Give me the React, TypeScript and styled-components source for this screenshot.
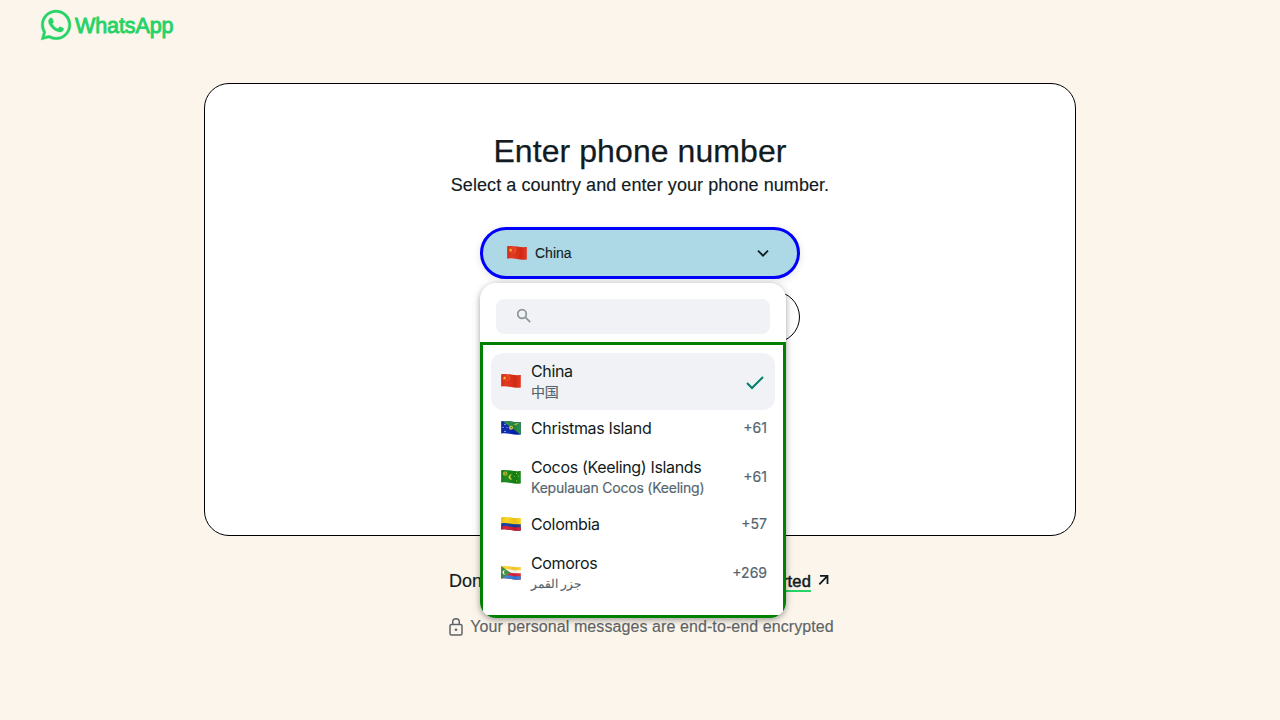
import React from 'react';
import styled, { createGlobalStyle } from 'styled-components';
import { SiWhatsapp } from 'react-icons/si';

const Global = createGlobalStyle`
  * { box-sizing: border-box; }
  body { margin: 0; background: #fcf5eb; color: #111b21; font-family: "Liberation Sans", Arial, sans-serif; overflow: hidden; }
`;
const Page = styled.div`height: 720px; display: flex; flex-direction: column; align-items: center;`;
const Header = styled.header`
  width: 100%; height: 50px; padding-left: 40.5px; display: flex; align-items: center; gap: 5px; color: #25d366; flex: none;
`;
const Logo = styled(SiWhatsapp)`width: 30px; height: 30px; stroke: #25d366; stroke-width: 0.3px; overflow: visible; margin-right: -0.5px;`;
const Wordmark = styled.span`padding-top: 2px; font-size: 21.5px; line-height: 30px; letter-spacing: -0.1px; -webkit-text-stroke: 0.9px #25d366; white-space: nowrap;`;
const Card = styled.main`
  margin-top: 33px; width: 872px; height: 453px; flex: none; background: #fff; border: 1px solid #000; border-radius: 25px;
  display: flex; flex-direction: column; align-items: center; padding-top: 48px;
`;
const Title = styled.h1`margin: 0; font-size: 32px; line-height: 38px; font-weight: 400; letter-spacing: 0.08px; -webkit-text-stroke: 0.25px #111b21; white-space: nowrap;`;
const Subtitle = styled.p`margin: 2px 0 0; font-size: 18px; line-height: 26px; letter-spacing: 0.07px; -webkit-text-stroke: 0.15px #111b21; white-space: nowrap;`;
const Field = styled.div`position: relative; margin-top: 29px; width: 320px;`;
const CountryButton = styled.button`
  width: 320px; height: 52px; border: 3px solid #00f; border-radius: 26px; background: #add8e6; color: #111b21;
  display: flex; align-items: center; padding: 0 26px 0 24px; font: 14px "Liberation Sans", sans-serif;
  box-shadow: 0 2px 8px rgba(0,0,0,.1);
`;
const ButtonLabel = styled.span`flex: 1; text-align: left; margin-left: 8px; -webkit-text-stroke: 0.1px #111b21;`;
const PhoneInput = styled.div`margin-top: 12px; height: 52px; border: 1px solid #000; border-radius: 26px;`;
const Menu = styled.div`
  position: absolute; top: 56px; left: 0; width: 306px; height: 335px; border-radius: 16px; background: #fff; overflow: hidden;
  display: flex; flex-direction: column; box-shadow: 0 2px 5px rgba(11,20,26,.26), 0 2px 10px rgba(11,20,26,.16);
`;
const Search = styled.div`margin: 16px 16px 8px; height: 35px; flex: none; border-radius: 8px; background: #f0f2f5; padding: 9px 20px;`;
const SearchIcon = styled.svg`display: block; width: 16px; height: 16px;`;
const List = styled.div`flex: 1; border: 3px solid #008000; padding: 8px; font-family: Inter, "Noto Sans CJK SC", sans-serif;`;
const Row = styled.div<{ $tall?: boolean; $active?: boolean }>`
  height: ${p => (p.$tall ? 57 : 39)}px; border-radius: 12px; background: ${p => (p.$active ? '#f0f2f5' : 'transparent')};
  display: flex; align-items: center; padding: 0 8px ${p => (p.$tall ? 0 : 2)}px 10px;
`;
const FlagArt = styled.svg`width: 20px; height: 16px; margin-bottom: 1px; flex: none;`;
const Names = styled.div`flex: 1; margin-left: 10px; display: flex; flex-direction: column; align-items: flex-start;`;
const Name = styled.span`font-size: 16px; line-height: 21px; letter-spacing: -0.34px; white-space: nowrap;`;
const Native = styled.span<{ $arabic?: boolean }>`
  font-size: ${p => (p.$arabic ? 11.5 : 14)}px; line-height: 20px; color: #54656f; letter-spacing: ${p => (p.$arabic ? 0 : -0.22)}px;
  -webkit-text-stroke: 0.15px #54656f; white-space: nowrap;
`;
const Code = styled.span`font-size: 14px; line-height: 20px; margin-bottom: 1px; color: #54656f; -webkit-text-stroke: 0.2px #54656f;`;
const Signup = styled.div`margin-top: 34px; width: 382px; display: flex; justify-content: space-between; align-items: flex-start; font-size: 18px; line-height: 22px; white-space: nowrap; -webkit-text-stroke: 0.15px #111b21;`;
const SignupLink = styled.span`display: flex; align-items: flex-start; font-size: 16.5px; letter-spacing: 0.15px; -webkit-text-stroke: 0.5px #111b21;`;
const Underlined = styled.span`height: 22px; border-bottom: 2px solid #25d366; line-height: 22px;`;
const Arrow = styled.svg`width: 12px; height: 12px; margin: 4px 1px 0 7px;`;
const Encrypted = styled.div`margin: 23px 0 0 3px; display: flex; align-items: center; gap: 7px; color: #5e6467; font-size: 16px; line-height: 24px; letter-spacing: 0.085px; -webkit-text-stroke: 0.15px #5e6467; white-space: nowrap;`;

type Country = 'cn' | 'cx' | 'cc' | 'co' | 'km';
const outline = 'M.2 1.2C4 .6 7 1 10 1.5s6 .9 9.8.5V14.6C16 15 13 14.7 10 14.1S4 13.1.2 13.6Z';
const band = (y: number) => `M0 ${y}c4-.6 7-.2 10 .3s6 .9 10 .5V16H0Z`;

function Flag({ code }: { code: Country }) {
  const id = React.useId();
  return (
    <FlagArt viewBox="0 0 20 16">
      <defs>
        <clipPath id={id}><path d={outline} /></clipPath>
        <linearGradient id={id + 's'}>
          <stop offset="0" stopColor="#000" stopOpacity=".12" /><stop offset=".25" stopColor="#fff" stopOpacity=".06" />
          <stop offset=".7" stopColor="#000" stopOpacity=".08" /><stop offset="1" stopColor="#fff" stopOpacity=".04" />
        </linearGradient>
      </defs>
      <g clipPath={`url(#${id})`}>
        {code === 'cn' && <>
          <path fill="#e22d15" d="M0 0h20v16H0z" />
          <path fill="#ffc51f" d="m3.6 3 .5 1.4 1.5.1-1.2.9.4 1.5-1.2-.9-1.3.9.4-1.5-1.1-.9 1.5-.1z" />
          <g fill="#f08a1c"><circle cx="7" cy="2.8" r=".6" /><circle cx="8.3" cy="4.1" r=".6" /><circle cx="8.3" cy="5.8" r=".6" /><circle cx="7" cy="7.1" r=".6" /></g>
        </>}
        {code === 'cx' && <>
          <path fill="#0021ad" d="M0 0h20v16H0z" /><path fill="#258b40" d="M0 0h20v15Z" />
          <circle cx="10" cy="7.7" r="2" fill="#dccf4a" /><path d="m9 7.2 2-.4-.5 2z" fill="#258b40" />
          <path d="m13 4.8 2-1.5 2.8-.1-2.1 1.2-1 .9z" fill="#d5c842" />
          <g fill="#d5ddf5"><circle cx="4" cy="4.4" r=".6" /><circle cx="2" cy="7.4" r=".6" /><circle cx="6" cy="7.2" r=".5" /><circle cx="4" cy="11.4" r=".7" /></g>
        </>}
        {code === 'cc' && <>
          <path fill="#118516" d="M0 0h20v16H0z" /><circle cx="4.2" cy="4.6" r="2.2" fill="#d4bf20" /><path d="M4 4h1v2.3H4zM3 3.8h2.5" stroke="#4d7d17" strokeWidth=".6" fill="none" />
          <path d="M11.3 5.8a2.5 2.5 0 1 0 .2 4.2 2 2 0 1 1-.2-4.2Z" fill="#e5dc29" />
          <g fill="#c8d52f"><circle cx="15.5" cy="4.4" r=".6" /><circle cx="13.3" cy="7.4" r=".5" /><circle cx="17.3" cy="7" r=".5" /><circle cx="15.5" cy="11.8" r=".6" /></g>
        </>}
        {code === 'co' && <>
          <path fill="#fbd116" d="M0 0h20v16H0z" />
          <path fill="#123a9c" d={band(7.4)} /><path fill="#d31932" d={band(10.4)} />
        </>}
        {code === 'km' && <>
          <path fill="#ffd02e" d="M0 0h20v16H0z" /><path fill="#fff" d={band(4.4)} />
          <path fill="#dc2338" d={band(7.4)} /><path fill="#327dde" d={band(10.4)} />
          <path fill="#3c8e3c" d="M0 1 9.5 7.6 0 14z" /><path d="M4 5.3a2.1 2.1 0 1 0 .3 4 2.3 2.3 0 0 1-.3-4Z" fill="#fff" />
        </>}
        <path d="M0 0h20v16H0z" fill={`url(#${id}s)`} />
      </g>
    </FlagArt>
  );
}

const countries: { flag: Country; name: string; native?: string; arabic?: boolean; dial?: string }[] = [
  { flag: 'cn', name: 'China', native: '中国' },
  { flag: 'cx', name: 'Christmas Island', dial: '+61' },
  { flag: 'cc', name: 'Cocos (Keeling) Islands', native: 'Kepulauan Cocos (Keeling)', dial: '+61' },
  { flag: 'co', name: 'Colombia', dial: '+57' },
  { flag: 'km', name: 'Comoros', native: 'جزر القمر', arabic: true, dial: '+269' },
];

export default function App() {
  return (
    <Page>
      <Global />
      <Header><Logo /><Wordmark>WhatsApp</Wordmark></Header>
      <Card>
        <Title>Enter phone number</Title>
        <Subtitle>Select a country and enter your phone number.</Subtitle>
        <Field>
          <CountryButton>
            <Flag code="cn" /><ButtonLabel>China</ButtonLabel>
            <svg width="16" height="16" viewBox="0 0 16 16" fill="none" stroke="#111b21" strokeWidth="1.8"><path d="m3 5.7 5 5 5-5" /></svg>
          </CountryButton>
          <PhoneInput />
          <Menu>
            <Search>
              <SearchIcon viewBox="0 0 16 16" fill="none" stroke="#8d9599" strokeWidth="1.7"><circle cx="6" cy="6" r="4.3" /><path d="m9.2 9.2 5 5" /></SearchIcon>
            </Search>
            <List>
              {countries.map(c => (
                <Row key={c.name} $tall={!!c.native} $active={!c.dial}>
                  <Flag code={c.flag} />
                  <Names><Name>{c.name}</Name>{c.native && <Native $arabic={c.arabic}>{c.native}</Native>}</Names>
                  {c.dial ? <Code>{c.dial}</Code> : (
                    <svg width="24" height="24" viewBox="0 0 24 24" fill="none" stroke="#008069" strokeWidth="2"><path d="m4 13 5 5L20 7" /></svg>
                  )}
                </Row>
              ))}
            </List>
          </Menu>
        </Field>
      </Card>
      <Signup>
        <span>Don't</span>
        <SignupLink>
          <Underlined>started</Underlined>
          <Arrow viewBox="0 0 12 12" fill="none" stroke="#111b21" strokeWidth="1.8"><path d="M1.3 10.3 9.3 2.2M2 1.9h7.5V10" /></Arrow>
        </SignupLink>
      </Signup>
      <Encrypted>
        <svg width="14" height="18" viewBox="0 0 14 18" fill="none" stroke="#5e6467" strokeWidth="1.5"><rect x="1" y="6.5" width="12" height="10.5" rx="1.5" /><path d="M3.7 6.5V4a3.3 3.3 0 0 1 6.6 0v2.5" /><circle cx="7" cy="11.8" r="1.3" fill="#5e6467" stroke="none" /></svg>
        <span>Your personal messages are end-to-end encrypted</span>
      </Encrypted>
    </Page>
  );
}
